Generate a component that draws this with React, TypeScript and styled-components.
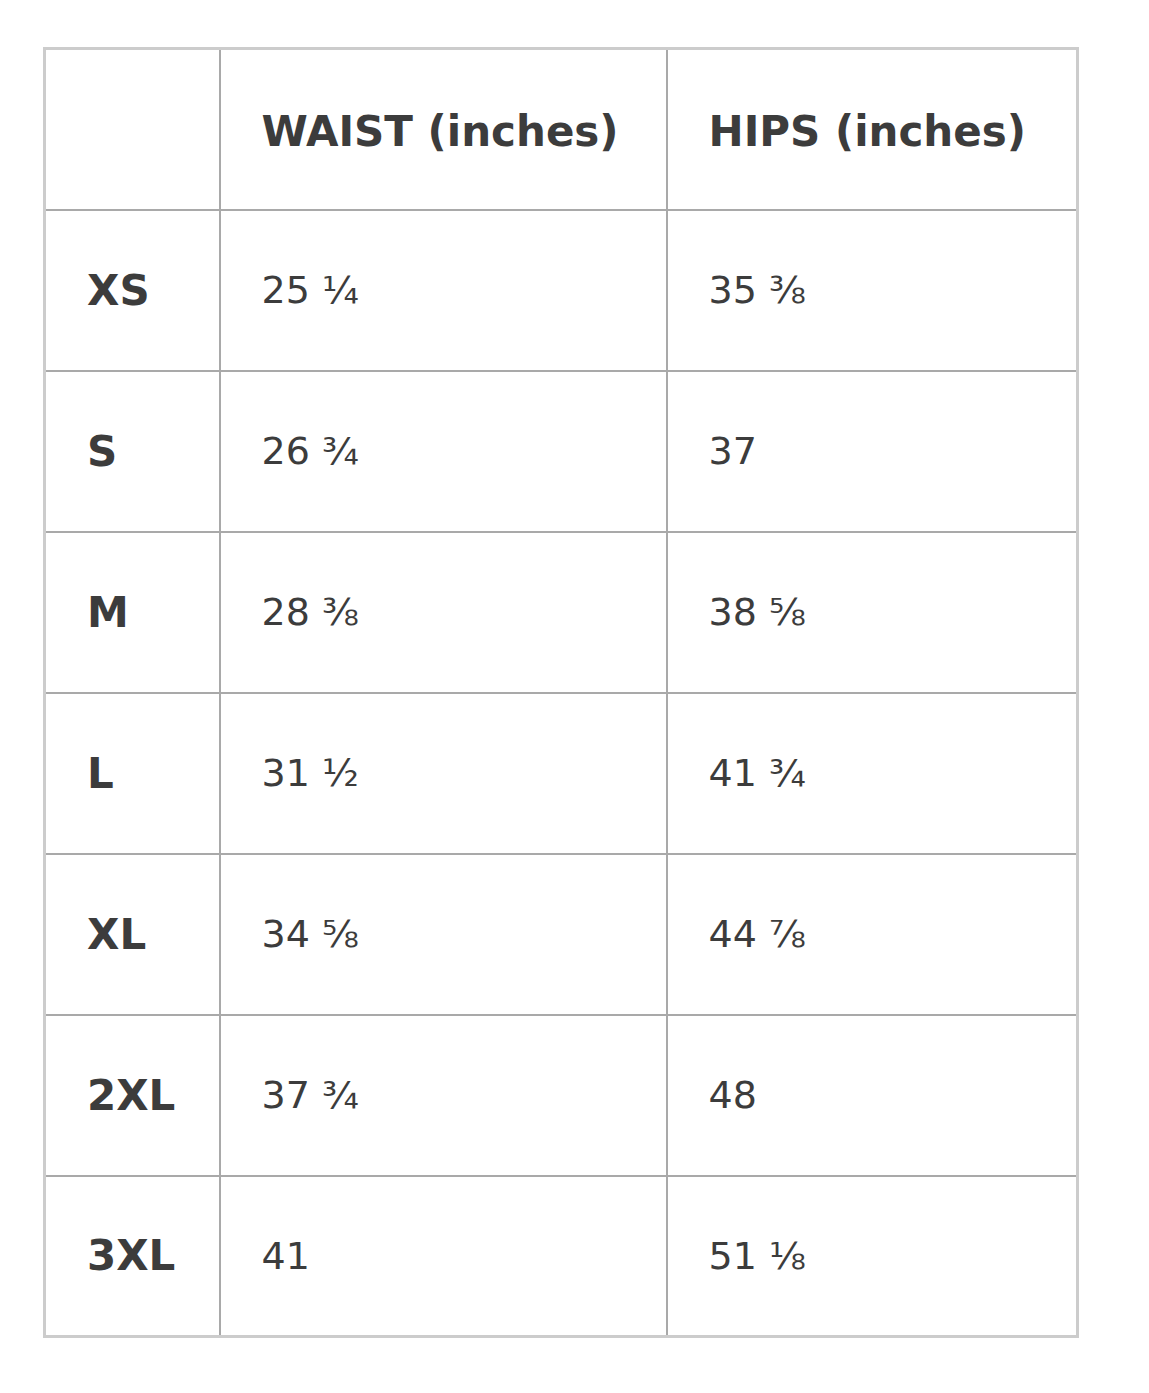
import styled, { createGlobalStyle } from "styled-components";

const GlobalStyle = createGlobalStyle`
  body {
    margin: 0;
    background: #ffffff;
    font-family: "DejaVu Sans", "Liberation Sans", sans-serif;
    color: #3c3c3c;
  }
`;

const Page = styled.div`
  padding: 47px 0 0 43px;
`;

const Table = styled.table`
  border-collapse: collapse;
  table-layout: fixed;
  width: 1033px;
  border: 3px solid #cccccc;
`;

const Col = styled.col<{ $w: number }>`
  width: ${({ $w }) => $w}px;
`;

const Row = styled.tr`
  height: 161px;
`;

const Cell = styled.td<{ $bold?: boolean }>`
  border: 2px solid #a9a9a9;
  padding: 0 0 0 41px;
  font-size: ${({ $bold }) => ($bold ? 42 : 38)}px;
  font-weight: ${({ $bold }) => ($bold ? 700 : 400)};
  vertical-align: middle;
  white-space: nowrap;
`;

const HeadCell = styled.th`
  border: 2px solid #a9a9a9;
  padding: 4px 0 0 41px;
  font-size: 42px;
  font-weight: 700;
  text-align: left;
  vertical-align: middle;
  white-space: nowrap;
`;

const sizes = [
  { size: "XS", waist: "25 ¼", hips: "35 ⅜" },
  { size: "S", waist: "26 ¾", hips: "37" },
  { size: "M", waist: "28 ⅜", hips: "38 ⅝" },
  { size: "L", waist: "31 ½", hips: "41 ¾" },
  { size: "XL", waist: "34 ⅝", hips: "44 ⅞" },
  { size: "2XL", waist: "37 ¾", hips: "48" },
  { size: "3XL", waist: "41", hips: "51 ⅛" },
];

const App = () => {
  return (
    <Page>
      <GlobalStyle />
      <Table>
        <colgroup>
          <Col $w={175} />
          <Col $w={447} />
          <Col $w={411} />
        </colgroup>
        <thead>
          <Row>
            <HeadCell />
            <HeadCell>WAIST (inches)</HeadCell>
            <HeadCell>HIPS (inches)</HeadCell>
          </Row>
        </thead>
        <tbody>
          {sizes.map((s) => (
            <Row key={s.size}>
              <Cell $bold>{s.size}</Cell>
              <Cell>{s.waist}</Cell>
              <Cell>{s.hips}</Cell>
            </Row>
          ))}
        </tbody>
      </Table>
    </Page>
  );
};
export default App;
